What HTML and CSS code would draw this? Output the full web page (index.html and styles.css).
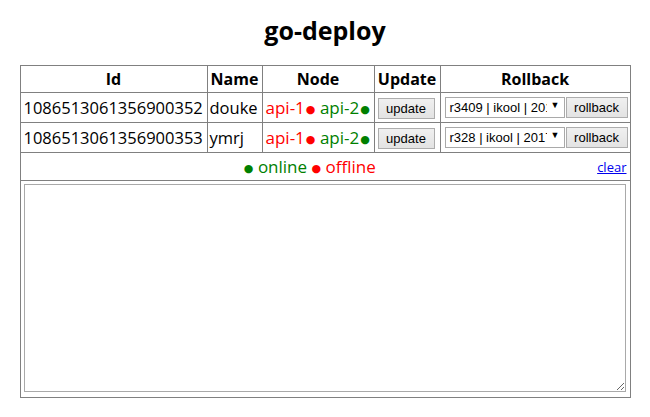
FILE: index.html
```html
<!DOCTYPE html>
<html>
<head>
<meta charset="utf-8">
<title>go-deploy</title>
<link rel="stylesheet" href="styles.css">
</head>
<body>
<h2 class="title">go-deploy</h2>
<table class="grid">
  <colgroup>
    <col class="c-id"><col class="c-name"><col class="c-node"><col class="c-update"><col class="c-rollback">
  </colgroup>
  <thead>
    <tr><th>Id</th><th>Name</th><th>Node</th><th>Update</th><th>Rollback</th></tr>
  </thead>
  <tbody>
    <tr class="row">
      <td class="id">1086513061356900352</td>
      <td>douke</td>
      <td class="node"><span class="off">api-1<span class="dot">●</span></span> <span class="on">api-2<span class="dot">●</span></span></td>
      <td class="ctl"><button class="btn">update</button></td>
      <td class="ctl"><div class="rb"><div class="sel"><span class="sel-text">r3409 | ikool | 2017-11-20</span><span class="arrow">▼</span></div><button class="btn">rollback</button></div></td>
    </tr>
    <tr class="row">
      <td class="id">1086513061356900353</td>
      <td>ymrj</td>
      <td class="node"><span class="off">api-1<span class="dot">●</span></span> <span class="on">api-2<span class="dot">●</span></span></td>
      <td class="ctl"><button class="btn">update</button></td>
      <td class="ctl"><div class="rb"><div class="sel"><span class="sel-text">r328 | ikool | 2017-11-20</span><span class="arrow">▼</span></div><button class="btn">rollback</button></div></td>
    </tr>
    <tr class="status">
      <td colspan="5"><a class="clear" href="#">clear</a><span class="on"><span class="dot">●</span> online</span> <span class="off"><span class="dot">●</span> offline</span></td>
    </tr>
    <tr class="log">
      <td colspan="5"><textarea class="logbox"></textarea></td>
    </tr>
  </tbody>
</table>
</body>
</html>
```
FILE: styles.css
```css
body {
  margin: 0;
  font-family: "Open Sans", "Noto Sans", sans-serif;
  background: #fff;
  color: #000;
}
.title {
  margin: 14px 0 19px;
  text-align: center;
  font-size: 25px;
  line-height: 32px;
  font-weight: 700;
}
.grid {
  width: 610px;
  margin: 0 auto;
  border-collapse: collapse;
  table-layout: fixed;
  font-size: 16.5px;
}
.c-id { width: 187px; }
.c-name { width: 55px; }
.c-node { width: 112px; }
.c-update { width: 66px; }
.c-rollback { width: 190px; }
.grid th, .grid td {
  border: 1px solid #808080;
  padding: 0 2px;
  white-space: nowrap;
  overflow: hidden;
}
.grid th {
  height: 26px;
  line-height: 22px;
  font-weight: 700;
  text-align: center;
  font-size: 16px;
}
.row td {
  height: 29px;
  line-height: 22px;
}
.row .id { padding-left: 3px; }
.row .node { padding-left: 3px; font-size: 17px; }
.off { color: #ff0000; }
.on { color: #008000; }
.dot {
  font-family: "DejaVu Sans", sans-serif;
  font-size: 11px;
  line-height: 0;
  vertical-align: 1px;
  margin-left: 1px;
}
.status .dot { margin: 0; }
.ctl { text-align: left; }
.btn {
  font-family: "Liberation Sans", Arial, sans-serif;
  font-size: 13px;
  height: 21px;
  padding: 0 6px;
  border: 1px solid #adadad;
  border-radius: 0;
  background: linear-gradient(#f0f0f0, #e3e3e3);
  color: #000;
  vertical-align: middle;
}
.row .ctl:nth-child(4) .btn { width: 57px; margin-left: 1px; }
.rb {
  display: flex;
  align-items: center;
  gap: 1px;
  padding-left: 2px;
}
.sel {
  width: 118px;
  height: 19px;
  border: 1px solid #a9a9a9;
  background: #fff;
  display: flex;
  align-items: center;
  font-family: "Liberation Sans", Arial, sans-serif;
  font-size: 13px;
  overflow: hidden;
}
.sel-text {
  flex: 1;
  min-width: 0;
  overflow: hidden;
  white-space: nowrap;
  padding-left: 4px;
}
.arrow {
  font-size: 9px;
  width: 17px;
  flex: none;
  text-align: center;
  background: #fff;
  align-self: flex-start;
  line-height: 14px;
}
.rb .btn { width: 62px; padding: 0; }
.status td {
  height: 27px;
  text-align: center;
  line-height: 24px;
  vertical-align: middle;
  font-size: 17px;
}
.clear {
  float: right;
  font-size: 13px;
  color: #0000ee;
  line-height: 20px;
  margin-right: 1px;
  margin-top: 2px;
}
.log td {
  padding: 3px 2px 5px 3px;
}
.logbox {
  display: block;
  box-sizing: border-box;
  width: 602px;
  height: 208px;
  border: 1px solid #a9a9a9;
  resize: both;
  margin: 0;
}
```
